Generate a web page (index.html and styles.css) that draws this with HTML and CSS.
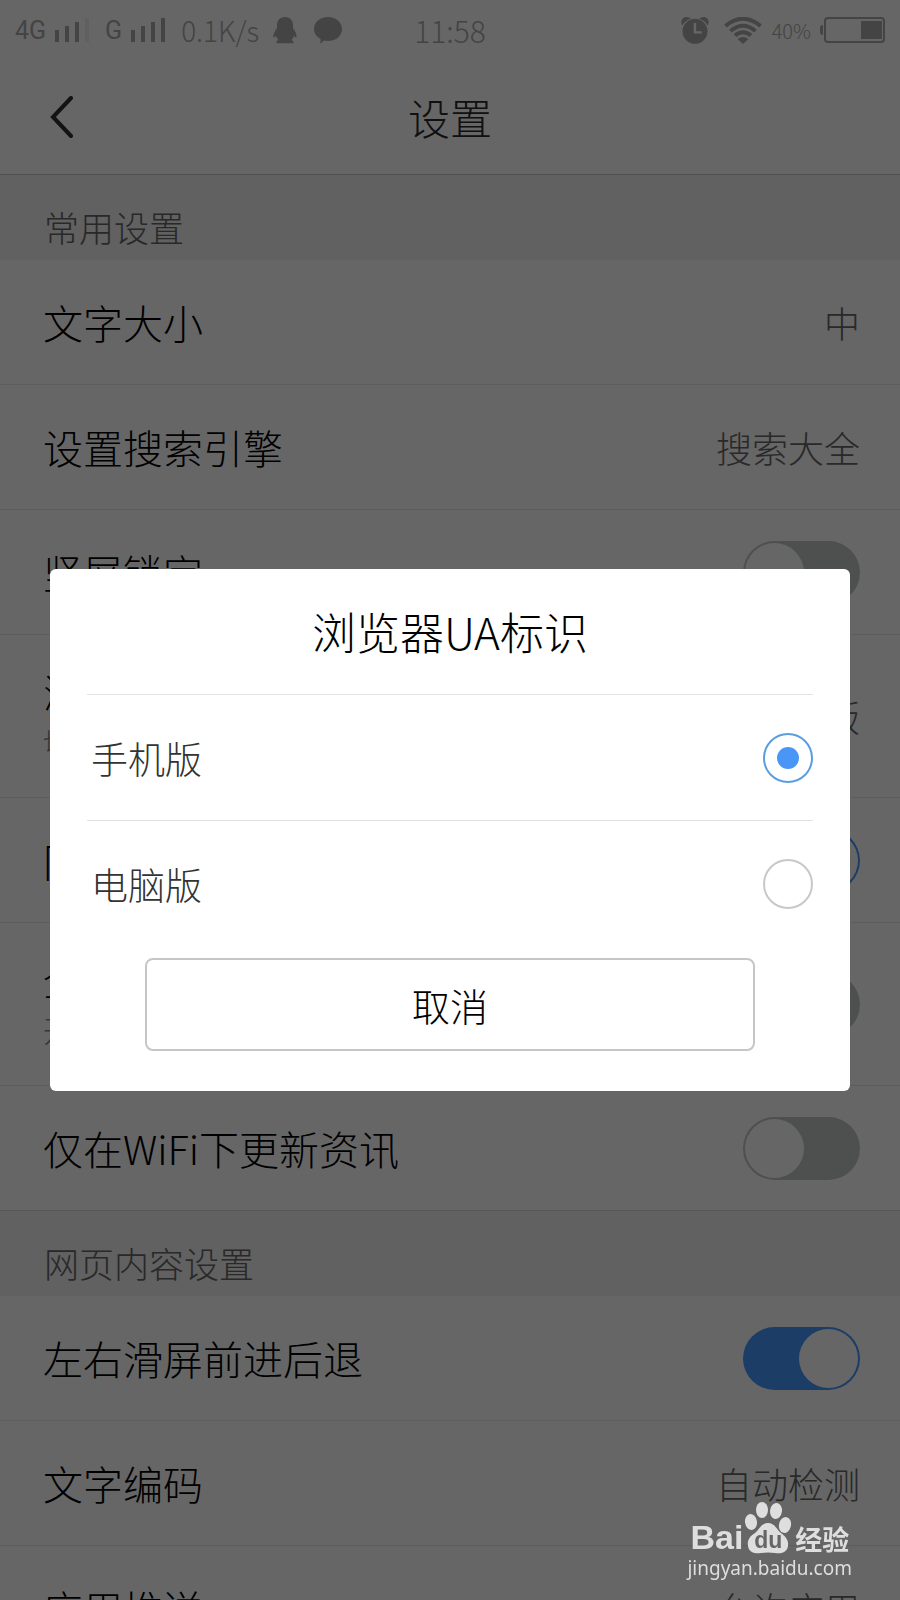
FILE: index.html
```html
<!DOCTYPE html>
<html lang="zh-CN">
<head>
<meta charset="utf-8">
<meta name="viewport" content="width=device-width, initial-scale=1">
<title>设置</title>
<link rel="stylesheet" href="styles.css">
</head>
<body>
<div class="app">
  <div class="status">
    <div class="status-left">
      <span class="net">4G</span>
      <svg class="bars" width="36" height="26" viewBox="0 0 36 26"><path d="M0 13h4v12H0zM10 9h4v16h-4zM20 5h4v20h-4z"/><path class="faint" d="M30 1h4v24h-4z"/></svg>
      <span class="net">G</span>
      <svg class="bars" width="36" height="26" viewBox="0 0 36 26"><path d="M0 13h4v12H0zM10 9h4v16h-4zM20 5h4v20h-4zM30 1h4v24h-4z"/></svg>
      <span class="speed">0.1K/s</span>
      <svg width="24" height="27" viewBox="0 0 24 27"><path d="M12 0C6.500 0 4 4 4 8v3C2 14 0 17 .5 20c.3 1.400 1.500 0 2.500-1.200.4 1.700 1.200 3 2.500 4.200-1.500.7-2.500 1.600-2 3.200h17c.5-1.600-.5-2.500-2-3.200 1.300-1.200 2.100-2.500 2.500-4.200 1 1.200 2.200 2.600 2.500 1.200.5-3-1.500-6-3.500-9V8c0-4-2.500-8-8-8z"/></svg>
      <svg class="bubble" width="28" height="27" viewBox="0 0 28 27"><path d="M14 0c8 0 14 5 14 12s-6 12-14 12c-1.500 0-3-.2-4.300-.5-1.100 1.600-2 2.500-3.700 2.900.6-1.500.8-2.700.5-4.400C2.500 19.800 0 16.300 0 12 0 5 6 0 14 0z"/></svg>
    </div>
    <span class="clock">11:58</span>
    <div class="status-right">
      <svg width="28" height="27" viewBox="0 0 28 27"><path fill-rule="evenodd" d="M14 1.800a12.500 12.500 0 1 1 0 25 12.500 12.500 0 0 1 0-25zM12.700 6v10.500h8v-2.300h-5.500V6z"/><path d="M1.300 8.500C-1 5 1 0 5.500 0 7.500 0 9 1 10 1.700 6 2.700 3.200 5 1.300 8.500zM26.700 8.500C29 5 27 0 22.500 0c-2 0-3.500 1-4.500 1.700 4 1 6.800 3.300 8.700 6.800z"/></svg>
      <svg class="wifi" width="38" height="27" viewBox="0 0 38 27"><path class="arc" d="M1.500 9Q19-5.500 36.500 9M6.500 14Q19 3.500 31.500 14M11 18.500Q19 12 27 18.500"/><path d="M13.500 22q5.500-4 11 0L19 27z"/></svg>
      <span class="percent">40%</span>
      <svg class="battery" width="65" height="26" viewBox="0 0 65 26"><rect class="case" x="5" y="1" width="59" height="24" rx="3"/><path d="M3 8v10C1 18 0 17 0 15v-4c0-2 1-3 3-3zM41 4h21v18H41z"/></svg>
    </div>
  </div>

  <header class="header">
    <button class="back" type="button" aria-label="返回"><svg width="24" height="42" viewBox="0 0 24 42"><path d="M21 2 3 21l18 19"/></svg></button>
    <h1 class="title">设置</h1>
  </header>

  <main>
    <h2 class="section">常用设置</h2>
    <div class="row"><span>文字大小</span><span class="value">中</span></div>
    <div class="row"><span>设置搜索引擎</span><span class="value">搜索大全</span></div>
    <div class="row"><label for="lock">竖屏锁定</label><input class="switch" id="lock" type="checkbox"></div>
    <div class="row tall"><span>浏览器UA标识<small class="hint">切换标识</small></span><span class="value">手机版</span></div>
    <div class="row"><label for="page">网页</label><input class="switch" id="page" type="checkbox" checked></div>
    <div class="row tall"><label for="full">全屏<small class="hint">开启</small></label><input class="switch" id="full" type="checkbox"></div>
    <div class="row last"><label for="wifi">仅在WiFi下更新资讯</label><input class="switch" id="wifi" type="checkbox"></div>
    <h2 class="section">网页内容设置</h2>
    <div class="row"><label for="swipe">左右滑屏前进后退</label><input class="switch" id="swipe" type="checkbox" checked></div>
    <div class="row"><span>文字编码</span><span class="value">自动检测</span></div>
    <div class="row"><span>应用推送</span><span class="value">允许应用</span></div>
  </main>
</div>

<div class="overlay">
  <form class="dialog" role="dialog" aria-labelledby="dialog-title">
    <h2 class="dialog-title" id="dialog-title">浏览器UA标识</h2>
    <label class="option">手机版<input class="radio" type="radio" name="ua" checked></label>
    <label class="option">电脑版<input class="radio" type="radio" name="ua"></label>
    <button class="cancel" type="button">取消</button>
  </form>
</div>

<div class="watermark">
  <div class="brand">
    <span class="bai">Bai</span>
    <span class="paw">
      <svg width="48" height="52" viewBox="0 0 48 52"><ellipse cx="7" cy="20" rx="6" ry="8" transform="rotate(-8 7 20)"/><ellipse cx="18" cy="8" rx="6" ry="8"/><ellipse cx="32" cy="9" rx="6" ry="8" transform="rotate(8 32 9)"/><ellipse cx="41" cy="23" rx="6" ry="8" transform="rotate(12 41 23)"/><path d="M24 21c-7 0-9 7-13 10-5 3-8 7-7 13 1 7 8 8 13 7q7-1 14 0c5 1 12 0 13-7 1-6-3-10-7-13-4-3-6-10-13-10z"/></svg>
      <span class="du">du</span>
    </span>
    <span class="jingyan">经验</span>
  </div>
  <span class="site">jingyan.baidu.com</span>
</div>
</body>
</html>
```

FILE: styles.css
```css
* { box-sizing: border-box; }

body {
  margin: 0;
  background: #fff;
  color: #000;
  font-family: "Noto Sans CJK SC", sans-serif;
  font-weight: 300;
}

h1, h2 { margin: 0; font-weight: 300; }
svg { display: block; flex: none; }
button, input { margin: 0; font: inherit; color: inherit; }

.app { height: 100vh; overflow: hidden; }

/* status bar */
.status {
  display: grid;
  grid-template-columns: 1fr auto 1fr;
  align-items: center;
  height: 60px;
  padding: 0 15px;
  color: #aaa;
  fill: #aaa;
}
.status-left, .status-right { display: flex; align-items: center; }
.status-right { justify-content: flex-end; }
.net { font: 25px Roboto, sans-serif; }
.bars { margin: 0 14px 0 9px; }
.faint { fill: #f0f0f0; }
.speed { margin: 0 14px 0 0; font-size: 28px; line-height: 40px; }
.bubble { margin-left: 17px; }
.clock { font-size: 30px; line-height: 40px; }
.wifi { margin: 0 10px 0 15px; }
.arc { fill: none; stroke: #aaa; stroke-width: 4; }
.percent { font-size: 20px; }
.battery { margin-left: 9px; }
.case { fill: none; stroke: #aaa; stroke-width: 2; }

/* header */
.header {
  display: grid;
  grid-template-columns: 1fr auto 1fr;
  align-items: center;
  height: 115px;
  padding: 0 50px;
  border-bottom: 1px solid #c8c8c8;
}
.back {
  justify-self: start;
  padding: 0;
  border: 0;
  background: none;
}
.back path { fill: none; stroke: #303030; stroke-width: 4; stroke-linecap: round; }
.title { color: #282828; font-size: 42px; line-height: 60px; }

/* settings list */
.section {
  height: 85px;
  padding: 20px 44px 0;
  background: #f2f2f2;
  color: #666;
  font-size: 35px;
  line-height: 64px;
}
.row {
  display: flex;
  align-items: center;
  justify-content: space-between;
  height: 125px;
  padding: 0 40px 0 43px;
  border-bottom: 1px solid #e8e8e8;
  font-size: 40px;
}
.tall { height: 163px; line-height: 50px; }
.last { border-color: #dcdcdc; }
.hint { display: block; color: #888; font-size: 30px; }
.value { color: #666; font-size: 36px; }

.switch {
  appearance: none;
  display: flex;
  flex: none;
  width: 117px;
  height: 63px;
  padding: 2px;
  border-radius: 32px;
  background: #c2c8c5;
}
.switch::before {
  content: "";
  width: 59px;
  height: 59px;
  border-radius: 50%;
  background: #fff;
}
.switch:checked { justify-content: flex-end; background: #4899ff; }

/* dialog */
.overlay {
  position: fixed;
  inset: 0;
  display: flex;
  align-items: center;
  justify-content: center;
  padding: 60px 50px 0;
  background: rgba(0, 0, 0, 0.6);
}
.dialog {
  flex: 1;
  padding: 0 37px 40px;
  border-radius: 6px;
  background: #fff;
}
.dialog-title {
  font-size: 44px;
  line-height: 125px;
  text-align: center;
}
.option {
  display: flex;
  align-items: center;
  justify-content: space-between;
  height: 126px;
  padding-left: 4px;
  border-top: 1px solid #e2e2e2;
  color: #333;
  font-size: 37px;
}
.radio {
  appearance: none;
  display: grid;
  place-items: center;
  width: 50px;
  height: 50px;
  border: 2px solid #c8c8c8;
  border-radius: 50%;
}
.radio:checked { border-color: #5a9ee0; }
.radio:checked::before {
  content: "";
  width: 22px;
  height: 22px;
  border-radius: 50%;
  background: #4a96f6;
}
.cancel {
  display: block;
  width: calc(100% - 116px);
  height: 93px;
  margin: 12px auto 0;
  padding: 0;
  border: 2px solid #c6c6c6;
  border-radius: 8px;
  background: #fff;
  color: #000;
  font-size: 38px;
}

/* watermark */
.watermark {
  position: fixed;
  right: 48px;
  bottom: 18px;
  color: #dedede;
  fill: #dedede;
}
.brand { display: flex; align-items: flex-end; height: 52px; padding-left: 3px; }
.bai { font: bold 34px/34px "Liberation Sans", sans-serif; }
.paw { position: relative; margin: 0 3px 0 1px; }
.du {
  position: absolute;
  right: 0;
  bottom: 1px;
  left: 0;
  color: #666;
  font: bold 23px/26px "Liberation Sans", sans-serif;
  text-align: center;
}
.jingyan { font-size: 27px; font-weight: 700; line-height: 30px; }
.site { display: block; font: 19px/28px "Noto Sans", sans-serif; }
```
